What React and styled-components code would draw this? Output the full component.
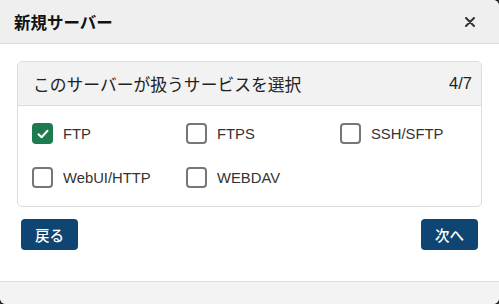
import { createGlobalStyle } from 'styled-components';
import styled from 'styled-components';

const COLORS = {
  backdrop: "#2a2a2a",
  headerBg: "#efefef",
  cardHeadBg: "#f2f2f2",
  border: "#dcdcdc",
  text: "#222",
  label: "#333",
  green: "#1e7b4f",
  blue: "#0f4573",
}

const GlobalStyle = createGlobalStyle`
html, body {
  margin:0;
  padding:0;
  background:${COLORS.backdrop};
}
body {
  font-family:"Liberation Sans", "Noto Sans CJK JP", sans-serif;
}
`

const StyledDialog = styled.div`
width:499px;
height:304px;
display:flex;
flex-direction:column;
background:white;
border-radius:0 6px 6px 6px;
overflow:hidden;
`

const StyledHeader = styled.header`
height:43px;
flex-shrink:0;
display:flex;
align-items:center;
justify-content:space-between;
padding:0 24px 0 14px;
background:${COLORS.headerBg};
border-bottom:1px solid ${COLORS.border};
`

const StyledTitle = styled.h1`
margin:0;
font-size:16.5px;
font-weight:700;
color:#111;
`

const StyledClose = styled.button`
border:none;
background:none;
padding:0;
display:flex;
color:#333;
cursor:pointer;
`

const StyledBody = styled.main`
flex:1;
padding:17px 17px 0;
display:flex;
flex-direction:column;
`

const StyledCard = styled.section`
border:1px solid ${COLORS.border};
border-radius:5px;
overflow:hidden;
`

const StyledCardHead = styled.div`
height:43px;
display:flex;
align-items:center;
justify-content:space-between;
padding:0 9px 0 15px;
background:${COLORS.cardHeadBg};
border-bottom:1px solid ${COLORS.border};
font-size:16.8px;
color:${COLORS.text};
`

const StyledCount = styled.span`
font-size:16.5px;
`

const StyledGrid = styled.div`
display:grid;
grid-template-columns:154px 154px 154px;
row-gap:23px;
padding:17px 14px 18px;
`

const StyledOption = styled.label`
display:flex;
align-items:center;
gap:10px;
font-size:14.8px;
color:${COLORS.label};
height:21px;
`

const StyledBox = styled.span`
width:21px;
height:21px;
box-sizing:border-box;
border-radius:4px;
border:${p => p.checked ? "none" : "2px solid #777"};
background:${p => p.checked ? COLORS.green : "white"};
display:flex;
align-items:center;
justify-content:center;
`

const StyledActions = styled.div`
display:flex;
justify-content:space-between;
padding:12px 4px 0;
`

const StyledButton = styled.button`
height:31px;
padding:0 14px;
border:none;
border-radius:4px;
background:${COLORS.blue};
color:white;
font-family:inherit;
font-size:14.5px;
font-weight:500;
cursor:pointer;
`

const StyledFooter = styled.footer`
height:22px;
flex-shrink:0;
background:#f3f3f3;
border-top:1px solid ${COLORS.border};
`

const SERVICES = [
  { name: "FTP", checked: true },
  { name: "FTPS" },
  { name: "SSH/SFTP" },
  { name: "WebUI/HTTP" },
  { name: "WEBDAV" },
]

function Check({ checked }) {
  return (
    <StyledBox checked={checked}>
      {checked && (
        <svg width="14" height="14" viewBox="0 0 14 14">
          <path d="M2.5 7.2 L5.6 10.2 L11.5 3.8" fill="none" stroke="white" strokeWidth="2" strokeLinecap="round" strokeLinejoin="round" />
        </svg>
      )}
    </StyledBox>
  )
}

export default function App() {
  return (
    <>
      <GlobalStyle />
      <StyledDialog>
        <StyledHeader>
          <StyledTitle>新規サーバー</StyledTitle>
          <StyledClose aria-label="close">
            <svg width="10" height="10" viewBox="0 0 10 10">
              <path d="M1 1 L9 9 M9 1 L1 9" stroke="#333" strokeWidth="2" strokeLinecap="round" />
            </svg>
          </StyledClose>
        </StyledHeader>
        <StyledBody>
          <StyledCard>
            <StyledCardHead>
              <span>このサーバーが扱うサービスを選択</span>
              <StyledCount>4/7</StyledCount>
            </StyledCardHead>
            <StyledGrid>
              {SERVICES.map(s => (
                <StyledOption key={s.name}>
                  <Check checked={s.checked} />
                  {s.name}
                </StyledOption>
              ))}
            </StyledGrid>
          </StyledCard>
          <StyledActions>
            <StyledButton>戻る</StyledButton>
            <StyledButton>次へ</StyledButton>
          </StyledActions>
        </StyledBody>
        <StyledFooter />
      </StyledDialog>
    </>
  )
}
